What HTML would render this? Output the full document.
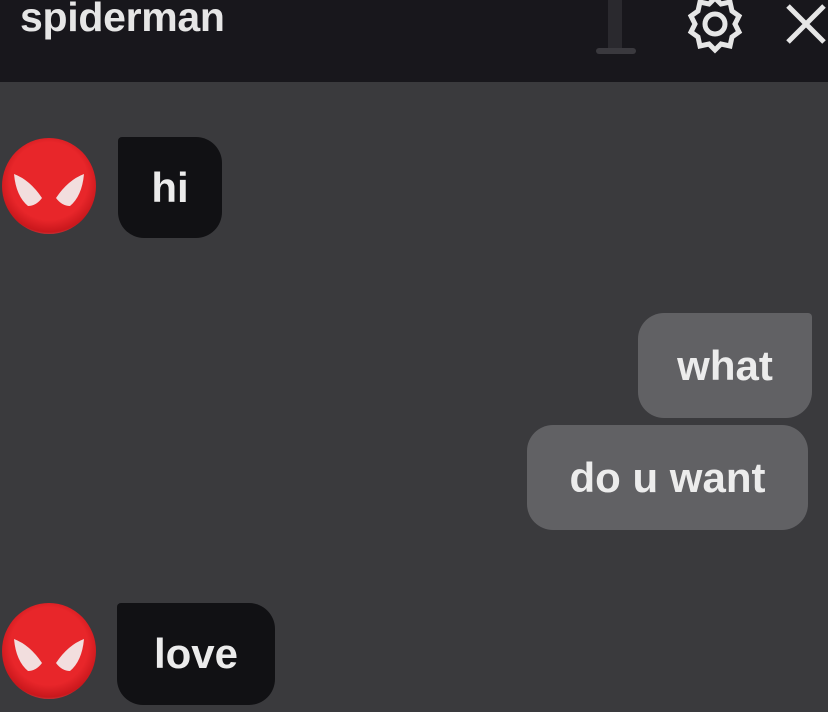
<!DOCTYPE html>
<html><head><style>
body{margin:0;width:828px;height:712px;background:#3a3a3d;overflow:hidden;position:relative;font-family:"Liberation Sans",sans-serif;font-weight:bold}
.hdr{position:absolute;left:0;top:0;width:828px;height:82px;background:#18171c}
.t{position:absolute;left:20px;top:-6px;font-size:41px;color:#e6e6e6;letter-spacing:-0.3px}
.b{position:absolute;color:#ececec;font-size:42px;display:flex;align-items:center;justify-content:center;box-sizing:border-box}
.dk{background:#111114;border-radius:26px}
.lt{background:#616164;border-radius:26px}
.av{position:absolute;width:94px;height:96px;border-radius:50%;background:radial-gradient(circle at 50% 45%,#e8262a 55%,#c9171c 72%,#b9787b 82%,#6a5557 100%)}
</style></head><body>
<div class="hdr">
<div class="t">spiderman</div>
<div style="position:absolute;left:608px;top:0;width:14px;height:48px;background:#2a292e"></div>
<div style="position:absolute;left:596px;top:48px;width:40px;height:6px;background:#3a393e;border-radius:3px"></div>
<svg style="position:absolute;left:683px;top:-8px" width="64" height="64" viewBox="0 0 64 64" fill="none" stroke="#e6e6e6" stroke-width="5"><path d="M32 6l6 6 9-2 2 9 7 5-4 8 4 8-7 5-2 9-9-2-6 6-6-6-9 2-2-9-7-5 4-8-4-8 7-5 2-9 9 2z"/><circle cx="32" cy="32" r="10"/></svg>
<svg style="position:absolute;left:784px;top:2px" width="44" height="44" viewBox="0 0 44 44" stroke="#e6e6e6" stroke-width="5"><path d="M4 4L40 40M40 4L4 40"/></svg>
</div>
<div class="av" style="left:2px;top:138px"><svg width="94" height="96" viewBox="0 0 94 96"><path d="M12 36q16 6 28 24q-6 8-14 8q-12-10-14-32z" fill="#f2dede"/><path d="M82 36q-16 6-28 24q6 8 14 8q12-10 14-32z" fill="#f2dede"/></svg></div>
<div class="b dk" style="left:118px;top:137px;width:104px;height:101px;border-top-left-radius:4px">hi</div>
<div class="b lt" style="left:638px;top:313px;width:174px;height:105px;border-top-right-radius:4px">what</div>
<div class="b lt" style="left:527px;top:425px;width:281px;height:105px">do u want</div>
<div class="av" style="left:2px;top:603px"><svg width="94" height="96" viewBox="0 0 94 96"><path d="M12 36q16 6 28 24q-6 8-14 8q-12-10-14-32z" fill="#f2dede"/><path d="M82 36q-16 6-28 24q6 8 14 8q12-10 14-32z" fill="#f2dede"/></svg></div>
<div class="b dk" style="left:117px;top:603px;width:158px;height:102px;border-top-left-radius:4px">love</div>
</body></html>
